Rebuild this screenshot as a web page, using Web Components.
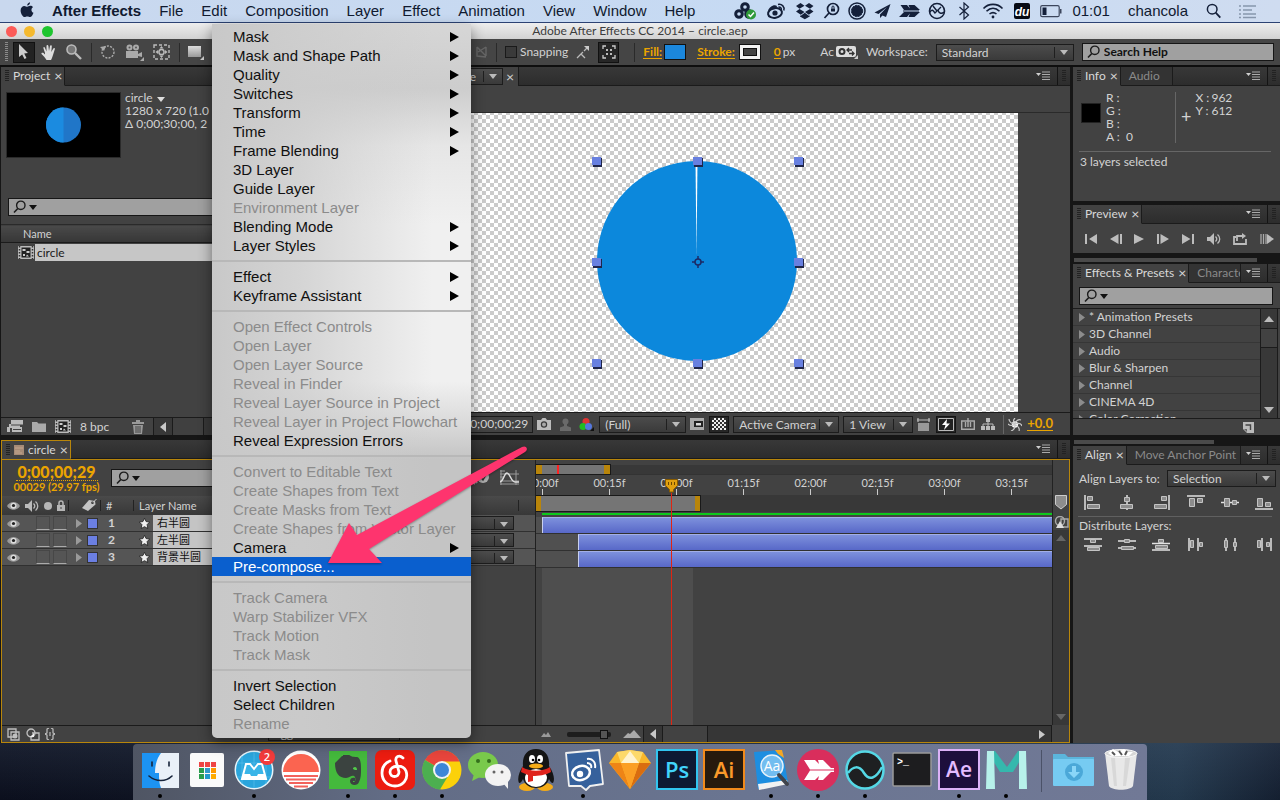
<!DOCTYPE html>
<html lang="en">
<head>
<meta charset="utf-8">
<title>Adobe After Effects CC 2014 - circle.aep</title>
<style>
  html, body { margin: 0; height: 100%; }
  body {
    display: flex; flex-direction: column; overflow: hidden; position: relative;
    font: 12px/14px Lato, "Noto Sans", "Noto Sans CJK SC", sans-serif;
    color: #d2d2d2;
    background: linear-gradient(90deg, #0b0f1d 0, #151d2c 50%, #23384c 92%, #141f30 100%);
    --panel: #424242; --line: #1b1b1b; --gold: #eaa400; --mac: "Liberation Sans", Arial, sans-serif;
  }
  ae-window { flex: 1; min-height: 0; }
</style>
</head>
<body>
<mac-menubar></mac-menubar>
<ae-window></ae-window>
<mac-dock></mac-dock>
<layer-menu></layer-menu>
<pointer-arrow></pointer-arrow>

<script>
const make = (name, html, setup) => customElements.define(name, class extends HTMLElement {
  constructor() {
    super();
    const t = document.createElement('template');
    t.innerHTML = html;
    this.attachShadow({ mode: 'open' }).append(t.content.cloneNode(true));
  }
  connectedCallback() { if (setup && !this.ready) { this.ready = true; setup(this, this.shadowRoot); } }
});

/* ---------- icon set: name -> [width, height, markup] ---------- */
const ICONS = {
  apple: [14, 16, '<path fill="#14203a" d="M10 .3c.2 1.600-1.200 3.300-2.800 3.300C7 2 8.500.500 10 .3zM7.300 4.700c.7 0 1.700-1 3.100-.9 1 0 2 .5 2.600 1.400-2.300 1.400-1.900 4.700.5 5.600-.7 2-2 4.300-3.500 4.300-1 0-1.400-.7-2.700-.7-1.300 0-1.700.7-2.700.7C2.900 15.100.600 11.600.600 8.500c0-3 1.900-4.600 3.700-4.600 1.300 0 2.200.8 3 .8z"/>'],
  triad: [24, 18, '<g fill="none" stroke="#14203a" stroke-width="3"><circle cx="11" cy="5" r="3.300"/><circle cx="5" cy="12" r="3.300"/><circle cx="15" cy="12" r="3.300"/></g><circle cx="17" cy="12.500" r="5" fill="#2f9a3a"/><path d="M14.500 12.500l2 2 3.500-4" stroke="#fff" stroke-width="1.500" fill="none"/>'],
  weibo: [21, 18, '<ellipse cx="9" cy="11" rx="7" ry="4.800" fill="none" stroke="#14203a" stroke-width="2" transform="rotate(-10 9 11)"/><path fill="#14203a" d="M2 9c1-4 6-7 9-5l-1 3c-3 0-6 1-8 2z"/><circle cx="9" cy="11" r="2.600" fill="#14203a"/><path d="M12 2.500c4-.8 7 2.500 5.800 6M12.500 5c2-.2 3.200 1 2.800 3" stroke="#14203a" stroke-width="1.500" fill="none"/>'],
  dropbox: [20, 18, '<path fill="#14203a" d="M5.500 1L1 4l3.500 2.700L9.500 3.700zM14 1l4.500 3L15 6.700 10 3.700zM1 9.500l3.500-2.600 5 3-3.700 2.800zM18.500 9.500L15 6.900l-5 3 3.800 2.800zM5 13.500l.8.300 4-3 4 3 .9-.4v1l-4.900 2.800-4.800-2.800z"/>'],
  maglock: [17, 18, '<g fill="none" stroke="#14203a" stroke-width="1.700"><circle cx="10" cy="7" r="5.500"/><path d="M6 11l-4.500 5"/></g><path fill="#14203a" d="M8 6.500h4v3H8z"/><path d="M9 6.500v-1.500a1 1 0 012 0v1.500" fill="none" stroke="#14203a"/>'],
  badge: [18, 18, '<circle cx="9" cy="9" r="8" fill="none" stroke="#14203a" stroke-width="1.500"/><circle cx="9" cy="9" r="5.700" fill="#14203a" stroke="#14203a" stroke-dasharray="2 1"/>'],
  plane: [17, 18, '<path fill="#14203a" d="M16.500 2L.5 10.500l4 1.500L13 5 6 12.500V16l2.500-2.500 3.500 1.500z"/>'],
  arrows: [21, 18, '<path fill="#14203a" d="M0 3h8l3 3.500L9.500 3h6L21 8H5L1.500 3zM0 15h8l3-3.500L9.500 15h6L21 10H5z"/><path d="M4 9h16" stroke="#14203a"/>'],
  pulse: [18, 18, '<circle cx="9" cy="9" r="7.500" fill="none" stroke="#14203a" stroke-width="1.600"/><path d="M2 10c2-3 3-2 5 1l6-6M10 8c1 4 4 4 6 2M5 4l4 5" fill="none" stroke="#14203a" stroke-width="1.400"/>'],
  bluetooth: [20, 18, '<path d="M5.500 5l9 8-4.500 4V1l4.500 4-9 8" fill="none" stroke="#14203a" stroke-width="1.200"/>'],
  wifi: [22, 18, '<g fill="none" stroke="#14203a" stroke-width="1.600"><path d="M1.500 6.500c5-5.500 14-5.500 19 0M4.500 9.300c4-4 9-4 13 0M7.500 12c2.500-2 4.500-2 7 0"/></g><circle cx="11" cy="15" r="1.400" fill="#14203a"/>'],
  du: [20, 18, '<rect x="2" y="1" width="16" height="16" rx="2" fill="#060a14"/><text x="10" y="13.500" text-anchor="middle" font-family="Liberation Sans" font-style="italic" font-weight="bold" font-size="12" fill="#fff">du</text>'],
  battery: [22, 18, '<rect x=".7" y="3.700" width="18.500" height="11" rx="1.500" fill="none" stroke="#3c465c" stroke-width="1.200"/><rect x="2.500" y="5.500" width="4" height="7.500" fill="#14203a"/><path fill="#3c465c" d="M20 7h1.500v4.500H20z"/>'],
  spot: [15, 18, '<circle cx="6.200" cy="7.200" r="4.800" fill="none" stroke="#14203a" stroke-width="1.500"/><path d="M9.700 10.700l4.600 5" stroke="#14203a" stroke-width="1.800"/>'],
  list: [18, 18, '<path d="M0 4h2M4 4h13M0 8h2M4 8h9M0 12h2M4 12h13M0 15.500h2M4 15.500h13" stroke="#8796ac" stroke-width="1.700"/>'],
  grip: [4, 12, '<path d="M0 .5h4M0 2.500h4M0 4.500h4M0 6.500h4M0 8.500h4M0 10.500h4" stroke="#222"/>'],
  bargrip: [3, 20, '<path d="M0 .5h3M0 2.500h3M0 4.500h3M0 6.500h3M0 8.500h3M0 10.500h3M0 12.500h3M0 14.500h3M0 16.500h3M0 18.500h3" stroke="#8a8a8a"/>'],
  menu: [15, 10, '<path fill="#d0d0d0" d="M0 2h5L2.500 5z"/><path d="M6 1h8M6 3.500h8M6 6h8M6 8.500h8" stroke="#aaa" stroke-width="1.200"/>'],
  cursor: [10, 16, '<path fill="#ccc" d="M0 0l9 9-3.800.4 2.300 4.600-2 1-2.300-4.600L0 13z"/>'],
  hand: [16, 16, '<path fill="#ddd" d="M4 9L2.500 4.500C2 3 3.500 2.500 4 4l1.500 3.500L5.500 2c0-1.500 1.700-1.500 1.900 0L8 7l1-5c.3-1.400 2-1 1.800.4L10.300 8l2-3.500c.7-1.200 2-.5 1.500.8L12 11c-.6 2-1.500 4.500-2 5H5.500C4.500 14 2 11.500.5 10 0 8.800 1.500 8.300 2.500 9L4 10.500z"/>'],
  zoom: [16, 16, '<circle cx="5.500" cy="5.500" r="4.500" fill="#777" stroke="#bbb" stroke-width="1.600"/><path d="M9 9l6 6" stroke="#bbb" stroke-width="2.400"/>'],
  rotate: [16, 16, '<circle cx="8" cy="8" r="6" fill="none" stroke="#aaa" stroke-width="1.400" stroke-dasharray="2 1.300"/><path fill="#aaa" d="M0 3l6-1-2 5z"/>'],
  camera: [19, 17, '<g fill="#aaa"><circle cx="4.500" cy="3.500" r="3"/><circle cx="11" cy="3.500" r="3"/><path d="M1 7h12v7H1zM13 10l4-2v5l-4-1zM19 17v-4l-4 4z"/></g><circle cx="4.500" cy="3.500" r="1" fill="#555"/><circle cx="11" cy="3.500" r="1" fill="#555"/>'],
  panbehind: [17, 16, '<rect x="1" y="1" width="15" height="14" fill="none" stroke="#bbb" stroke-width="1.400" stroke-dasharray="3 2"/><circle cx="8.500" cy="8" r="2.600" fill="none" stroke="#bbb" stroke-width="1.500"/><path fill="#bbb" d="M8.500 2l2 2.500h-4zM8.500 14l2-2.500h-4zM2.500 8L5 6v4zM14.500 8L12 6v4z"/>'],
  rect: [16, 16, '<defs><linearGradient id="r" x2="0" y2="1"><stop stop-color="#ddd"/><stop offset="1" stop-color="#999"/></linearGradient></defs><rect x="0" y="2" width="13" height="11" fill="url(#r)"/><path fill="#ccc" d="M16 16v-4l-4 4z"/>'],
  pen: [14, 14, '<path fill="#bbb" d="M0 7l6-6 5 6-5 6z"/>'],
  axis: [12, 12, '<path d="M1 1v9l9 1M1 1l9 9M10 1v9M2 6l8-5" stroke="#666" stroke-width="1.400" fill="none"/>'],
  snap: [14, 14, '<path d="M1 13l6-6M5 9l4 4M8 6l3-3" stroke="#bbb" stroke-width="1.300" fill="none"/><path fill="#ccc" d="M8 1h5v5z"/>'],
  focus: [14, 14, '<path d="M1 4V1h3M10 1h3v3M13 10v3h-3M4 13H1v-3" stroke="#ccc" stroke-width="1.300" fill="none"/><path fill="#bbb" d="M4 4h2v2H4zM8 4h2v2H8zM4 8h2v2H4zM8 8h2v2H8z"/>'],
  pill: [22, 14, '<rect x="0" y="1" width="20" height="11" rx="2" fill="#ddd"/><circle cx="6" cy="6.500" r="2.500" fill="none" stroke="#333" stroke-width="2"/><path d="M11 5h5M13 8.500h5M13 3l-2 2 2 2M16 6.500l2 2-2 2" stroke="#333" stroke-width="1.300" fill="none"/><path fill="#ccc" d="M22 14v-4l-4 4z"/>'],
  search: [13, 14, '<circle cx="7.800" cy="5.300" r="4.200" fill="none" stroke="#1c1c1c" stroke-width="1.400"/><path d="M4.800 8.500L1 12.500" stroke="#1c1c1c" stroke-width="1.600"/>'],
  down: [8, 5, '<path fill="currentColor" d="M0 0h8L4 5z"/>'],
  up: [10, 6, '<path fill="currentColor" d="M5 0l5 6H0z"/>'],
  right: [6, 9, '<path fill="currentColor" d="M0 0l6 4.500L0 9z"/>'],
  left: [6, 10, '<path fill="#c8c8c8" d="M6 0v10L0 5z"/>'],
  film: [16, 13, '<path fill="#bbb" d="M0 0h16v13H0z"/><path d="M1.500 0v13M14.500 0v13" stroke="#333" stroke-width="1.500" stroke-dasharray="1.500 1.500"/><path fill="#222" d="M3.500 1.500h9v10h-9z"/><path fill="#ccc" d="M4.500 3h3v2h-3zM8.500 5h3v2h-3zM5 8h2v2H5zM9 8.500l2 2H8z"/>'],
  footage: [16, 13, '<path fill="#bbb" d="M4 0h12v5H4zM2 4h11v4H2zM0 7h3v5H0zM5 7h10v5H5z"/><path d="M4 5h12M6 9.500h8" stroke="#444"/>'],
  folder: [14, 11, '<path fill="#aaa" d="M0 1h5l1.500 1.500H14V11H0z"/>'],
  trash: [12, 14, '<path fill="#999" d="M0 2h12v2H0zM4 0h4v2H4zM1 5h10l-1 9H2z"/><path d="M4 6v7M6 6v7M8 6v7" stroke="#444"/>'],
  square: [10, 10, '<path fill="#a68b77" d="M0 0h10v10H0z"/><path d="M1 3h8M1 6h5M1 8h7" stroke="#c5a78f"/>'],
  eye: [13, 9, '<path fill="#999" d="M0 5C3-.5 10-.5 13 5c-3 5-10 5-13 0z"/><circle cx="6.500" cy="4.700" r="3" fill="#ddd"/><circle cx="6.500" cy="4.500" r="1.600" fill="#222"/>'],
  speaker: [14, 12, '<path fill="#bbb" d="M0 4h3l4-4v12L3 8H0z"/><path d="M8.500 3.500c1.500 1.500 1.500 3.500 0 5M10.500 1.500c3 2.500 3 6.500 0 9" stroke="#bbb" stroke-width="1.300" fill="none"/>'],
  dot: [8, 8, '<circle cx="4" cy="4" r="4" fill="#b5b5b5"/>'],
  lock: [8, 11, '<path fill="#b5b5b5" d="M0 5h8v6H0z"/><path d="M2 5V3a2 2 0 014 0v2" stroke="#b5b5b5" stroke-width="1.500" fill="none"/><path fill="#444" d="M3.500 7h1v2h-1z"/>'],
  tag: [15, 13, '<path fill="#c4c4c4" d="M0 9l7-8 6 1 .5 3.500L6 12z"/><circle cx="10.500" cy="3.800" r="1.300" fill="#333"/><path d="M11 3.500L14.500 0" stroke="#ccc"/>'],
  star: [11, 11, '<path fill="#f0f0f0" stroke="#1c1c1c" stroke-width=".8" d="M5.500.3l1.600 3.300 3.600.4-2.600 2.600.7 3.900-3.300-1.800-3.300 1.800.7-3.900L.3 4l3.600-.4z"/>'],
  mblur: [20, 16, '<circle cx="12" cy="7" r="6" fill="#aaa"/><path d="M9 6l3 4 4-7" stroke="#333" stroke-width="1.500" fill="none"/><path d="M1 12l3 2M3 9l3 4" stroke="#aaa" stroke-width="2"/>'],
  graph: [20, 16, '<path d="M1 0v15M0 1h5M0 4h19M0 7h4M0 11h19M0 14h19M16 0v15" stroke="#999" stroke-width="1"/><path d="M0 12c4-1 4-9 7-9s4 9 8 9h4" stroke="#ddd" stroke-width="1.500" fill="none"/>'],
  t1: [14, 13, '<path fill="none" stroke="#c0c0c0" stroke-width="1.300" d="M1 1h8v8H1zM4 4h8v8H4z"/><circle cx="8" cy="8" r="2.500" fill="#c0c0c0"/>'],
  t2: [14, 13, '<circle cx="5" cy="5" r="4" fill="none" stroke="#c0c0c0" stroke-width="1.300"/><path fill="none" stroke="#c0c0c0" stroke-width="1.300" d="M6 5h7v7H5V8"/><path d="M4 9l4-4v4z" fill="#eee"/>'],
  t3: [10, 12, '<path d="M4 0L2 1v4L0 6l2 1v4l2 1M6 0l2 1v4l2 1-2 1v4l-2 1M5 4v4" stroke="#c0c0c0" fill="none" stroke-width="1.200"/>'],
  hillS: [10, 6, '<path fill="#999" d="M0 6l3-4 2 2 2-3 3 5z"/>'],
  hillL: [18, 8, '<path fill="#aaa" d="M0 8l5-5 2 1 4-4 7 8z"/>'],
  marker: [12, 15, '<path fill="#8d8d8d" stroke="#ccc" d="M.5.5h11v9L6 14 .5 9.500z"/>'],
  comp: [15, 13, '<circle cx="6" cy="5" r="4.500" fill="none" stroke="#aaa" stroke-width="1.400"/><path fill="none" stroke="#aaa" stroke-width="1.400" d="M7 3h7v8H7z"/><path fill="#ddd" d="M2 12l4-7 4 7z"/>'],
  snapshot: [14, 12, '<path fill="#bcbcbc" d="M0 2h4l1.500-2h3L10 2h4v10H0z"/><circle cx="7" cy="6.500" r="3.200" fill="#3a3a3a"/><circle cx="7" cy="6.500" r="2" fill="#aaa"/>'],
  person: [11, 13, '<circle cx="5.500" cy="3.500" r="3" fill="#6a6a6a"/><path fill="#6a6a6a" d="M4 6h3v2l4 1.500V13H0V9.500L4 8z"/>'],
  rgb: [15, 13, '<circle cx="7" cy="3.500" r="3.500" fill="#d33"/><circle cx="4" cy="8.500" r="3.500" fill="#2b2"/><circle cx="9.500" cy="8.500" r="3.500" fill="#57d"/><path fill="#111" d="M15 13v-4l-4 4z"/>'],
  roi: [14, 12, '<path fill="#aaa" d="M0 0h14v12H0z"/><path fill="#222" d="M4 3h9v6H4z"/><path fill="#ddd" d="M6 5h5v2.500H6z"/>'],
  alpha: [14, 12, '<path fill="#eee" d="M0 0h14v12H0z"/><path stroke="#333" stroke-width="2" stroke-dasharray="2 2" d="M0 1h14M2 3h12M0 5h14M2 7h12M0 9h14M2 11h12"/>'],
  px: [13, 13, '<path fill="#999" d="M1 5h11v8H1z"/><path d="M0 2h13M1 0v4M12 0v4" stroke="#bbb" stroke-width="1.200"/>'],
  flash: [16, 13, '<path fill="#222" stroke="#bbb" d="M.5.5h15v12H.5z"/><path fill="#fff" d="M9 1L4 7h3.500L6 12l6-6.500H8.500z"/>'],
  tl: [14, 12, '<path fill="none" stroke="#aaa" stroke-width="1.400" d="M.7 3h12.600v8.300H.7z"/><path d="M4.500 4v5M9.500 4v5M7 0v9" stroke="#aaa" stroke-width="1.400"/>'],
  tree: [14, 12, '<path fill="#bbb" d="M5 0h4v4H5zM0 8h4v4H0zM5 8h4v4H5zM10 8h4v4h-4z"/><path d="M7 4v4M2 8V6h10v2" stroke="#bbb" fill="none"/>'],
  aperture: [14, 13, '<circle cx="7" cy="6.500" r="3.200" fill="#fff"/><path d="M7 0c-2 2-2 4 0 6M13 2c-3-1-5 1-6 4M14 8c-1-3-4-3-7-2M11 13c1-3-1-5-4-6M3 13c3-1 4-3 4-6M0 6c2 2 5 2 7 0M1 1c0 3 3 5 6 5" stroke="#c8c8c8" stroke-width="1.200" fill="none"/>'],
  first: [12, 10, '<path fill="#bcbcbc" d="M0 0h2v10H0zM12 0v10L4 5z"/>'],
  prev: [12, 10, '<path fill="#bcbcbc" d="M10 0h2v10h-2zM8.500 0v10L0 5z"/>'],
  play: [10, 10, '<path fill="#bcbcbc" d="M0 0l10 5-10 5z"/>'],
  next: [12, 10, '<path fill="#bcbcbc" d="M0 0h2v10H0zM3.500 0v10L12 5z"/>'],
  last: [12, 10, '<path fill="#bcbcbc" d="M10 0h2v10h-2zM0 0v10l8.500-5z"/>'],
  loop: [14, 12, '<path d="M3 4H1v7h12V6M4 8V3h6" fill="none" stroke="#bcbcbc" stroke-width="1.800"/><path fill="#bcbcbc" d="M9 0l4 3-4 3z"/>'],
  ram: [14, 10, '<path d="M1 0v10M3.500 0v10M6 0v10" stroke="#aaa" stroke-width="1.300"/><path fill="#bcbcbc" d="M7 0l7 5-7 5z"/>'],
  note: [11, 11, '<path fill="#bbb" d="M0 0h11v11H4L0 7z"/><path d="M2.500 3h5v5" stroke="#444" fill="none" stroke-width="1.400"/><path fill="#666" d="M1 7h3v3z"/>'],
};
/* align and distribute glyphs share one vocabulary: a guide stroke plus two blocks */
const G = d => `<g fill="#8c8c8c" stroke="#c4c4c4">${d}</g>`, L = d => `<path d="${d}" stroke="#e2e2e2" stroke-width="1.500"/>`;
Object.assign(ICONS, {
  al: [18, 15, L('M1 0v15') + G('<path d="M3.500 1.500h5v4h-5zM3.500 9.500h12v4h-12z"/>')],
  ac: [18, 15, L('M9 0v15') + G('<path d="M6.500 2.500h5v4h-5zM2.500 9.500h12v4h-12z"/>')],
  ar: [18, 15, L('M17 0v15') + G('<path d="M9.500 1.500h5v4h-5zM2.500 9.500h12v4h-12z"/>')],
  at: [18, 15, L('M0 1h18') + G('<path d="M2.500 3.500h5v8h-5zM10.500 3.500h5v4h-5z"/>')],
  am: [18, 15, L('M0 7.500h18') + G('<path d="M3.500 3.500h5v8h-5zM11.500 5.500h4v4h-4z"/>')],
  ab: [18, 15, L('M0 14h18') + G('<path d="M2.500 3.500h5v8h-5zM10.500 7.500h5v4h-5z"/>')],
  d1: [18, 13, L('M0 1h18M0 8h18') + G('<path d="M6.500 1.500h5v3h-5zM3.500 9.500h12v3h-12z"/>')],
  d2: [18, 13, L('M0 3h18M0 10h18') + G('<path d="M6.500 1.500h5v3h-5zM3.500 8.500h12v3h-12z"/>')],
  d3: [18, 13, L('M0 5.500h18M0 12h18') + G('<path d="M6.500 1.500h5v3h-5zM3.500 7.500h12v3h-12z"/>')],
  d4: [18, 13, L('M2 0v13M11 0v13') + G('<path d="M3.500 2.500h3v7h-3zM12.500 4.500h3v4h-3z"/>')],
  d5: [18, 13, L('M5 0v13M14 0v13') + G('<path d="M3.500 2.500h3v7h-3zM12.500 4.500h3v4h-3z"/>')],
  d6: [18, 13, L('M7 0v13M16 0v13') + G('<path d="M2.500 2.500h3v7h-3zM11.500 4.500h3v4h-3z"/>')],
});
make('ui-icon', `<style>:host{display:inline-flex;flex:none}svg{display:block}</style>`, (el, root) => {
  const [w, h, body] = ICONS[el.getAttribute('name')];
  root.innerHTML += `<svg width="${w}" height="${h}" viewBox="0 0 ${w} ${h}" aria-hidden="true">${body}</svg>`;
});
const ic = n => `<ui-icon name="${n}"></ui-icon>`;
const BTN = 'button{all:unset;display:inline-flex;align-items:center;box-sizing:border-box;cursor:default}';

/* ---------- system menu bar ---------- */
make('mac-menubar', `<style>
  :host{display:flex;align-items:center;height:22px;flex:none;border-bottom:1px solid #2c4273;
    background:linear-gradient(90deg,#c9d8ee,#c6daf3 60%,#cfdcf0);color:#101a30;font:15px/22px var(--mac)}
  ${BTN}
  nav{display:flex;gap:18px;padding-left:20px;flex:1;align-items:center}
  nav ui-icon{margin-bottom:2px}
  .tray{display:flex;gap:8px;align-items:center;padding-right:10px}
  .user{display:flex;gap:18px;align-items:center;padding-right:23px}
  b{font-weight:700}
</style>
<nav>${ic('apple')}<button><b>After Effects</b></button>${['File', 'Edit', 'Composition', 'Layer', 'Effect', 'Animation', 'View', 'Window', 'Help'].map(t => `<button>${t}</button>`).join('')}</nav>
<div class="tray">${['triad', 'weibo', 'dropbox', 'maglock', 'badge', 'plane', 'arrows', 'pulse', 'bluetooth', 'wifi', 'du', 'battery'].map(ic).join('')}</div>
<div class="user"><time>01:01</time><span>chancola</span>${ic('spot')}${ic('list')}</div>`);

/* ---------- shared controls ---------- */
make('ae-select', `<style>
  :host{display:inline-grid;height:17px;box-sizing:border-box;border:1px solid #1c1c1c;background:linear-gradient(#4c4c4c,#3a3a3a);align-items:center;position:relative}
  select{appearance:none;border:0;background:none;color:#d2d2d2;font:inherit;line-height:15px;height:15px;padding:0 20px 0 5px;width:100%;outline:0;grid-area:1/1}
  :host([end]) select{text-align-last:right;padding-right:26px}
  i{grid-area:1/1;justify-self:end;border-left:1px solid #1f1f1f;padding:0 5px 0 5px;height:11px;display:flex;align-items:center;color:#bbb;pointer-events:none}
</style><select></select><i>${ic('down')}</i>`, (el, root) => {
  const s = root.querySelector('select');
  s.setAttribute('aria-label', el.getAttribute('label'));
  s.add(new Option(el.getAttribute('value') || ''));
});
make('ae-search', `<style>
  :host{display:flex;align-items:center;gap:1px;box-sizing:border-box;height:18px;border:1px solid #161616;background:#a0a0a0;padding:0 4px;color:#111}
  input{all:unset;flex:1;min-width:0;color:#111;font:inherit;font-weight:700}
  input::placeholder{color:#111;opacity:1}
  span{display:flex;padding:0 2px}
  :host([wide]) span{display:none} :host([wide]) input{padding-left:3px}
</style>${ic('search')}<span>${ic('down')}</span><input type="search">`, (el, root) => {
  const i = root.querySelector('input');
  i.setAttribute('aria-label', el.getAttribute('label'));
  i.placeholder = el.getAttribute('hint') || '';
});
make('ae-tab', `<style>
  :host{display:flex;align-items:center;box-sizing:border-box;height:19px;padding:0 12px 0 8px;color:#8a8a8a;border-right:1px solid var(--line);border-bottom:1px solid var(--line);white-space:nowrap;background:#333}
  :host(:not([active])){flex:0 1 auto;min-width:0;overflow:hidden}
  :host([active]){background:var(--panel);color:#d8d8d8;border-bottom-color:var(--panel);padding:0 2px 0 4px;gap:4px;flex:none}
  ${BTN} .x{font-size:14px} .x,ui-icon{display:none}
  :host([active]) .x,:host([active]) ui-icon{display:inline-flex}
  :host([active]) .x{width:8px}
</style>${ic('grip')}<button><slot></slot></button><button class="x" aria-label="Close tab">×</button>`);
make('ae-panel', `<style>
  :host{display:flex;flex-direction:column;min-width:0;min-height:0;background:var(--panel);overflow:hidden}
  header{display:flex;height:19px;flex:none;background:linear-gradient(#383838,#2c2c2c)}
  .rest{flex:1 0 auto;display:flex;justify-content:flex-end;align-items:center;border-bottom:1px solid var(--line);height:18px}
  .tabs{display:flex;flex:0 1 auto;min-width:0;overflow:hidden}
  .m{padding:0 6px 0 5px;flex:none;display:flex}
  .g{border-left:1px solid #141414;padding:0 4px;height:18px;display:flex;align-items:center}
  .body{flex:1;min-height:0;display:flex;flex-direction:column}
</style>
<header><div class="tabs"><slot name="tab"></slot></div><div class="rest"><span class="m">${ic('menu')}</span><span class="g">${ic('grip')}</span></div></header>
<div class="body"><slot></slot></div>`);

/* ---------- tool bar ---------- */
make('ae-toolbar', `<style>
  :host{display:flex;align-items:center;height:26px;flex:none;background:#454545;border-bottom:2px solid #0e0e0e;position:relative;white-space:nowrap;overflow:hidden}
  ${BTN}
  .tools{display:flex;align-items:center;padding-left:5px;flex:1;min-width:0;overflow:hidden}
  .tools>*{flex:none}
  .tools ui-icon{margin-right:9px}
  .sel{width:22px;height:21px;justify-content:center;background:#222;border:1px solid #111;margin:0 6px 0 5px}
  .sel ui-icon,.tools .g{margin:0}
  i{width:1px;height:19px;background:#2a2a2a;margin-right:8px}
  .right i{margin:0}
  .right{display:flex;align-items:center;flex:none;width:804px;padding-right:6px;box-sizing:border-box;gap:8px}
  label{display:flex;align-items:center;gap:3px}
  input[type=checkbox]{appearance:none;width:12px;height:12px;margin:0;background:#3a3a3a;border:1px solid #1a1a1a}
  .hot{color:var(--gold);border-bottom:1px solid var(--gold);line-height:13px;font-weight:700}
  .sw{width:22px;height:16px;background:#1b87dc;border:1px solid #111;margin-right:3px}
  .st{width:20px;height:14px;background:#444;border:3px solid #f4f4f4;outline:1px solid #111;box-shadow:inset 0 0 0 1px #111;margin:0 6px 0 3px}
  .f{width:21px;height:21px;background:#262626;border:1px solid #111;justify-content:center;margin-right:7px}
  .pair{display:flex;gap:2px;align-items:center}
  .zero{margin-right:17px}
  ae-select{width:138px} ae-search{flex:1}
</style>
<div class="tools"><ui-icon class="g" name="bargrip"></ui-icon><button class="sel" aria-label="Selection">${ic('cursor')}</button>${ic('hand')}${ic('zoom')}<i></i>${ic('rotate')}${ic('camera')}${ic('panbehind')}<i></i>${ic('rect')}${ic('pen')}</div>
<div class="right">${ic('axis')}<i></i><label><input type="checkbox">Snapping</label>${ic('snap')}<button class="f" aria-label="Snap options">${ic('focus')}</button><i></i>
<span class="pair"><button class="hot">Fill:</button><button class="sw" aria-label="Fill colour"></button></span>
<span class="pair"><button class="hot">Stroke:</button><button class="st" aria-label="Stroke colour"></button></span>
<span class="pair zero"><button class="hot">0</button><span>px</span></span>
<span class="pair">Ac ${ic('pill')}</span><span class="w">Workspace:</span><ae-select label="Workspace" value="Standard"></ae-select><ae-search wide label="Search Help" hint="Search Help"></ae-search></div>`);

/* ---------- project panel ---------- */
make('project-panel', `<style>
  :host{display:grid;min-width:0;min-height:0}
  .info{display:flex;gap:5px;padding:7px 0 0 6px;line-height:13px;white-space:nowrap}
  .info svg{display:block;background:#000;outline:1px solid #2a2a2a} p{margin:-2px 0 0;}
  .info p ui-icon{margin-left:4px;color:#ddd}
  ae-search{margin:41px 4px 0 7px}
  table{width:100%;border-collapse:collapse;margin-top:8px;border-top:1px solid #2a2a2a}
  th{font-weight:400;font-size:11px;text-align:left;height:17px;padding:0 0 0 22px;background:linear-gradient(#4a4a4a,#363636);border-bottom:1px solid var(--line)}
  td{padding:1px 0 0;} td div{display:flex;align-items:center;height:17px;padding-left:17px;gap:1px}
  td span{flex:1;background:#c6c6c6;color:#1a1a1a;height:17px;line-height:17px;padding-left:2px}
  .list{flex:1;min-height:0}
  footer{display:flex;align-items:center;height:17px;border-top:1px solid var(--line);padding-left:6px;gap:9px}
  footer .t{margin-left:14px} .sb{display:flex;flex:1;height:17px;border-left:1px solid var(--line);background:#383838;align-items:center}
  .sb ui-icon{margin:0 6px} .sb b{width:30px;height:17px;border:solid var(--line);border-width:0 1px;background:#404040}
</style>
<ae-panel><ae-tab slot="tab" active>Project</ae-tab>
<div class="info"><svg width="113" height="64" viewBox="0 0 113 64"><circle cx="56.500" cy="32" r="17.500" fill="#2076c8"/><path fill="#1b8be0" d="M56.500 14.500a17.500 17.500 0 000 35z"/></svg>
<p>circle${ic('down')}<br>1280 x 720 (1.0<br>Δ 0;00;30;00, 2</p></div>
<ae-search label="Search project"></ae-search>
<div class="list"><table><thead><tr><th>Name</th></tr></thead><tbody><tr><td><div>${ic('film')}<span>circle</span></div></td></tr></tbody></table></div>
<footer>${ic('footage')}${ic('folder')}${ic('film')}<span>8 bpc</span><ui-icon class="t" name="trash"></ui-icon><div class="sb">${ic('left')}<b></b></div></footer>
</ae-panel>`);

/* ---------- composition viewer ---------- */
const handles = [597, 698, 799].flatMap(x => [161, 262, 363].map(y => [x, y])).filter(([x, y]) => !(x === 698 && y === 262))
  .map(([x, y]) => `<g transform="translate(${x - 383} ${y - 87})"><path fill="#20264a" d="M1 1h9v9H1z"/><path fill="#6880e0" d="M0 0h9v8H0z"/></g>`).join('');
make('comp-viewer', `<style>
  :host{display:grid;min-width:0;min-height:0}
  ${BTN}
  .tab{display:flex;align-items:center;gap:3px;height:19px;background:var(--panel);border-right:1px solid var(--line);padding:0 4px 0 7px}
  .tab ae-select{width:170px;height:17px} .tab button{font-size:14px}
  .stage{flex:1;min-height:0;margin-top:26px;border-top:1px solid #2a2a2a;display:flex;justify-content:center;align-items:center;overflow:hidden}
  svg{flex:none;display:block;background:conic-gradient(#cbcbcb 25%,#fff 0 50%,#cbcbcb 0 75%,#fff 0) 0 0/8px 8px}
  footer{display:flex;align-items:center;justify-content:flex-end;height:22px;flex:none;border-top:1px solid #1b1b1b;padding-right:17px;gap:4px;white-space:nowrap}
  .tc{border:1px solid #1c1c1c;height:17px;padding:0 4px 0 20px}
  .hot{color:var(--gold);border-bottom:1px solid var(--gold);font-weight:700;line-height:13px;font-size:13px}
  .on{background:#262626;border:1px solid #141414;width:20px;height:17px;justify-content:center}
  .a{width:87px}.b{width:106px}.c{width:70px}
  .r{display:flex;align-items:center;gap:5px;padding-right:3px}
  footer ui-icon{margin:0 1px 0 0} .gap{margin:0 4px}.on ui-icon{margin:0} i{width:1px;height:19px;background:#666}
</style>
<ae-panel><div slot="tab" class="tab"><ae-select end label="Composition" value="Composition: circle"></ae-select><button aria-label="Close tab">×</button></div>
<div class="stage"><svg width="640" height="360" viewBox="0 0 640 360"><circle cx="319" cy="178" r="100" fill="#0c88dc"/><path fill="#fff" d="M317.500 79l2 0-1 95z"/>${handles}<g transform="translate(320 179)" fill="none" stroke="#1c2a66" stroke-width="1.500"><circle r="3"/><path d="M0-6v3M0 3v3M-6 0h3M3 0h3"/></g></svg></div>
<footer><button class="tc">0;00;00;29</button>${ic('snapshot')}<ui-icon class="gap" name="person"></ui-icon>${ic('rgb')}<ae-select class="a" label="Resolution" value="(Full)"></ae-select>${ic('roi')}<button class="on" aria-label="Transparency grid">${ic('alpha')}</button><ae-select class="b" label="3D view" value="Active Camera"></ae-select><ae-select class="c" label="View layout" value="1 View"></ae-select><span class="r">${ic('px')}<button class="on" aria-label="Fast previews">${ic('flash')}</button>${ic('tl')}${ic('tree')}</span><i></i>${ic('aperture')}<button class="hot">+0.0</button></footer>
</ae-panel>`);

/* ---------- timeline ---------- */
make('time-graph', `<style>
  :host{display:flex;flex-direction:column;position:relative;overflow:hidden;min-width:0;border-left:1px solid #202020}
  .nav{height:9px;margin-top:5px;background:#383838;display:flex;border-bottom:1px solid #333}
  .nav b,.area b{background:#757575;box-sizing:border-box;border:solid #b9850a;border-width:0 6px;outline:1px solid #191919}
  .nav b{width:74px;background:linear-gradient(#f22,#f22) 15px 0/2px 100% no-repeat #757575}
  .ruler{display:flex;height:20px;margin-left:-27px;font-size:11px;line-height:16px}
  .ruler span{flex:none;width:67px;text-align:center;background:linear-gradient(#ccc,#ccc) 50% 100%/1px 6px no-repeat}
  .area{height:15px;background:#383838;display:flex;padding:1px 0} .area b{width:164px;border-width:0 5px}
  .cache{height:2px;background:#0cc81c;margin:1px 0 2px 6px;}
  .tracks{flex:1;background:linear-gradient(#4e4e4e,#4e4e4e) 6px 0/151px 100% no-repeat}
  .row{height:16px;border-bottom:1px solid #303030;background:#505050;display:flex}
  .row b{flex:1;margin-left:6px;background:linear-gradient(#7d90dc,#5868c8);border-top:1px solid #a3afe6;border-left:1px solid #c8d0f0;box-sizing:border-box}
  .row.late b{margin-left:42px}
  .head{position:absolute;left:129px;top:19px;bottom:0;display:flex;flex-direction:column;align-items:center;width:13px}
  .head svg{display:block} .head u{flex:1;width:1px;background:#e02412}
</style>
<div class="nav"><b></b></div>
<div class="ruler">${['00:00f', '00:15f', '01:00f', '01:15f', '02:00f', '02:15f', '03:00f', '03:15f'].map(t => `<span>${t}</span>`).join('')}</div>
<div class="area"><b></b></div><div class="cache"></div>
<div class="tracks"><div class="row"><b></b></div><div class="row late"><b></b></div><div class="row late"><b></b></div></div>
<div class="head"><svg width="13" height="14" viewBox="0 0 13 14"><path fill="#e0a010" stroke="#8a5c00" d="M.5.5h12v6L8.500 10.500V13h-4v-2.500L.5 6.500z"/><path d="M3.500 3v3M6.500 3v3M9.500 3v3" stroke="#6b4700"/></svg><u></u></div>`);

const layer = (n, name) => `<tr><td><div class="av">${ic('eye')}<s></s><s></s></div></td><td><div class="lb">${ic('right')}<em></em></div></td><td class="n">${n}</td><td><div class="nm">${ic('star')}<span>${name}</span></div></td><td><ae-select label="Parent of ${name}"></ae-select></td></tr>`;
make('timeline-panel', `<style>
  :host{display:grid;min-width:0;min-height:0}
  ${BTN}
  ae-panel{border-left:1px solid #b8860b}
  ae-tab{border-top:1px solid #b8860b;border-right:1px solid #b8860b;}
  ae-tab span{display:flex;gap:4px;align-items:center}
  .body{flex:1;min-height:0;display:grid;grid-template-columns:533px minmax(0,1fr) 17px;grid-template-rows:minmax(0,1fr) 17px;border:solid #b8860b;border-width:1px 1px 1px 0}
  .left{display:flex;flex-direction:column;min-width:0}
  .top{display:flex;height:36px;align-items:center;box-sizing:border-box;white-space:nowrap}
  .time{width:109px;text-align:center;color:var(--gold);font-weight:700;font-size:11px;line-height:12px}
  .time strong{display:block;font-size:16px;line-height:16px;width:82px;margin:auto;border-bottom:1px dotted var(--gold)}
  .top ae-search{width:240px} .ic{margin-left:auto;display:flex;gap:9px;padding-right:15px}
  table{border-collapse:collapse;table-layout:fixed;width:100%}
  th,td{padding:0;text-align:left;font-weight:400}
  th{height:19px;font-size:11px;background:linear-gradient(#4a4a4a,#383838)}
  th div{display:flex;align-items:center;height:11px;border-right:1px solid #222;padding-left:5px}
  td{height:16px;border-bottom:1px solid #303030;background:#555;line-height:16px}
  td div{display:flex;align-items:center;height:16px}
  .av{padding-left:5px;gap:3px} .av ui-icon{margin-right:13px}
  s{width:12px;height:12px;border:1px solid #474747;border-bottom-color:#aaa}
  .lb{padding-left:7px;gap:3px;color:#9a9a9a} .lb em{width:11px;height:11px;background:#6b7fe2;border:1px solid #333;box-sizing:border-box;margin-left:2px}
  .n{padding-left:7px;font-weight:700}
  .nm{padding-left:5px;gap:3px} .nm span{flex:1;background:#c4c4c4;color:#111;padding-left:4px;font-size:11px;line-height:16px;height:16px}
  td ae-select{width:100px;height:14px;display:grid}
  th:last-child div{margin-right:16px}
  .gut{border-left:1px solid #222;display:flex;flex-direction:column;align-items:center;padding-top:35px;gap:6px;color:#666;background:linear-gradient(#424242 70px,#383838 0)}
  .gut .e{margin:auto 0 5px;transform:rotate(180deg)}
  footer{grid-column:1/3;display:flex;align-items:center;border-top:1px solid #1b1b1b;}
  .fl{width:533px;display:flex;align-items:center;gap:5px;padding-left:5px;box-sizing:border-box}
  .fl button{margin-left:208px;border:1px solid #1c1c1c;width:132px;height:14px;justify-content:center;white-space:nowrap;line-height:12px}
  .z{display:flex;align-items:center;gap:12px;width:108px;padding-left:6px;box-sizing:border-box}
  input{appearance:none;width:44px;height:5px;margin:0 0 0 4px;background:#1d1d1d;border-radius:2px}
  input::-webkit-slider-thumb{appearance:none;width:8px;height:9px;background:#555;border:1px solid #111}
  .sb{flex:1;display:flex;align-items:center;height:16px;background:#363636;border:solid #1b1b1b;border-width:0 1px;padding-right:6px}
  .sb b{width:44px;height:16px;border:solid #1b1b1b;border-width:0 1px;background:#424242;margin-right:auto} .sb ui-icon:first-child{margin:0 6px}
  .sb .r{color:#c8c8c8}
</style>
<ae-panel><ae-tab slot="tab" active><span>${ic('square')}circle</span></ae-tab>
<div class="body"><div class="left">
<div class="top"><div class="time"><strong>0;00;00;29</strong>00029 (29.97 fps)</div><ae-search label="Search layers"></ae-search><div class="ic">${ic('mblur')}${ic('graph')}</div></div>
<table><colgroup><col style="width:67px"><col style="width:32px"><col style="width:33px"><col><col style="width:121px"></colgroup>
<thead><tr><th><div style="gap:5px">${ic('eye')}${ic('speaker')}${ic('dot')}${ic('lock')}</div></th><th><div style="padding-left:13px">${ic('tag')}</div></th><th><div>#</div></th><th><div>Layer Name</div></th><th><div></div></th></tr></thead>
<tbody>${layer(1, '右半圆')}${layer(2, '左半圆')}${layer(3, '背景半圆')}</tbody></table></div>
<time-graph></time-graph>
<div class="gut">${ic('marker')}${ic('comp')}${ic('up')}<ui-icon class="e" name="up"></ui-icon></div>
<footer><div class="fl">${ic('t1')}${ic('t2')}${ic('t3')}<button>Toggle Switches / Modes</button></div><div class="z">${ic('hillS')}<input type="range" value="92" aria-label="Timeline zoom">${ic('hillL')}</div><div class="sb">${ic('left')}<b></b><ui-icon class="r" name="right"></ui-icon></div></footer>
</div></ae-panel>`);

/* ---------- right-hand panels ---------- */
make('info-panel', `<style>
  :host{display:grid;height:134px;flex:none}
  .g{display:flex;padding:6px 0 0 8px;line-height:13px;height:51px}
  .k{width:18px;height:18px;background:#000;border:1px solid #222;margin:11px 5px 0 0}
  dl{margin:0;display:grid;grid-template-columns:20px auto;align-content:start} dt,dd{margin:0}
  .rgba{width:69px;margin-top:-1px}
  .plus{border-left:1px solid #666;padding:17px 4px 0 5px;font-size:18px;line-height:14px;height:34px}
  dl.xy{grid-template-columns:16px auto;margin-top:-1px}
  p{margin:8px 9px 0 6px;border-top:1px solid #666;padding:3px 1px}
</style>
<ae-panel><ae-tab slot="tab" active>Info</ae-tab><ae-tab slot="tab">Audio</ae-tab>
<div class="g"><div class="k"></div><dl class="rgba"><dt>R :</dt><dd></dd><dt>G :</dt><dd></dd><dt>B :</dt><dd></dd><dt>A :</dt><dd>0</dd></dl><div class="plus">+</div><dl class="xy"><dt>X :</dt><dd>962</dd><dt>Y :</dt><dd>612</dd></dl></div>
<p>3 layers selected</p></ae-panel>`);
make('preview-panel', `<style>
  :host{display:grid;height:48px;flex:none} ${BTN}
  div{display:flex;justify-content:space-between;align-items:center;padding:4px 6px 0 12px;height:22px}
</style><ae-panel><ae-tab slot="tab" active>Preview</ae-tab><div>${['first', 'prev', 'play', 'next', 'last', 'speaker', 'loop', 'ram'].map(n => `<button aria-label="${n}">${ic(n)}</button>`).join('')}</div></ae-panel>`);
make('effects-panel', `<style>
  :host{display:grid;height:171px;flex:none}
  ae-search{margin:4px 7px 3px 6px;flex:none}
  .w{display:flex;flex:1;min-height:0;border-top:1px solid #1b1b1b}
  ul{margin:0;padding:0;list-style:none;flex:1;overflow:hidden}
  li{height:16px;border-bottom:1px solid #363636;display:flex;align-items:center;gap:4px;padding-left:6px;color:#d2d2d2}
  li ui-icon{color:#8c8c8c}
  .sb{width:16px;border:solid #1b1b1b;border-width:0 1px;background:#383838;margin-right:2px;display:flex;flex-direction:column;align-items:center;color:#bbb}
  .sb b{width:16px;height:18px;border:solid #1b1b1b;border-width:1px 0;background:#424242;margin:6px 0 auto} .sb ui-icon:first-child{margin-top:7px} .d{transform:rotate(180deg);margin-bottom:5px}
  footer{height:16px;border-top:1px solid #1b1b1b;display:flex;justify-content:flex-end;align-items:center;padding-right:26px}
</style><ae-panel><ae-tab slot="tab" active>Effects &amp; Presets</ae-tab><ae-tab slot="tab">Character</ae-tab>
<ae-search label="Search effects"></ae-search>
<div class="w"><ul>${['* Animation Presets', '3D Channel', 'Audio', 'Blur &amp; Sharpen', 'Channel', 'CINEMA 4D', 'Color Correction'].map(t => `<li>${ic('right')}${t}</li>`).join('')}</ul><div class="sb">${ic('up')}<b></b><ui-icon class="d" name="up"></ui-icon></div></div>
<footer>${ic('note')}</footer></ae-panel>`);
make('align-panel', `<style>
  :host{display:grid;flex:1;min-height:0} ${BTN}
  .to{display:flex;align-items:center;justify-content:space-between;padding:5px 4px 0 6px;white-space:nowrap}
  ae-select{width:109px}
  .row{display:flex;justify-content:space-between;padding:8px 7px 6px 11px}
  p{margin:0 8px 0 5px;border-top:1px solid #606060;padding:2px 1px 0}
  .r2{padding-top:5px}
</style><ae-panel><ae-tab slot="tab" active>Align</ae-tab><ae-tab slot="tab">Move Anchor Point</ae-tab>
<div class="to"><span>Align Layers to:</span><ae-select label="Align Layers to" value="Selection"></ae-select></div>
<div class="row">${['al', 'ac', 'ar', 'at', 'am', 'ab'].map(n => `<button aria-label="Align">${ic(n)}</button>`).join('')}</div>
<p>Distribute Layers:</p>
<div class="row r2">${['d1', 'd2', 'd3', 'd4', 'd5', 'd6'].map(n => `<button aria-label="Distribute">${ic(n)}</button>`).join('')}</div></ae-panel>`);

/* ---------- application window ---------- */
make('ae-window', `<style>
  :host{display:flex;flex-direction:column;background:#161616}
  .title{display:flex;align-items:center;height:16px;flex:none;background:linear-gradient(#eee,#d2d2d2);color:#3c3c3c;position:relative}
  .title span{flex:1;text-align:center}
  .lights{position:absolute;left:6px;display:flex;gap:7px} .lights i{width:11px;height:11px;border-radius:50%}
  .work{flex:1;min-height:0;display:grid;grid-template-columns:minmax(0,1fr) 207px;gap:3px;padding-left:1px}
  .main{display:grid;grid-template-rows:368fr 303fr;gap:5px;min-width:0;min-height:0}
  .upper{display:grid;grid-template-columns:322fr 744fr;gap:3px;min-width:0;min-height:0}
  .side{display:flex;flex-direction:column;min-height:0}
  .bar{height:4px;background:#4a4a4a;margin:5px 0 2px 1px;flex:none}
</style>
<div class="title"><div class="lights"><i style="background:#fc5b57"></i><i style="background:#f5b92e"></i><i style="background:#1fc52f"></i></div><span>Adobe After Effects CC 2014 – circle.aep</span></div>
<ae-toolbar></ae-toolbar>
<div class="work"><div class="main"><div class="upper"><project-panel></project-panel><comp-viewer></comp-viewer></div><timeline-panel></timeline-panel></div>
<div class="side"><info-panel></info-panel><preview-panel style="margin-top:4px"></preview-panel><div class="bar" style="margin-right:23px"></div><effects-panel></effects-panel><div class="bar" style="margin-right:66px"></div><align-panel></align-panel></div></div>`);

/* ---------- Layer context menu ---------- */
const MENU = [['Mask>', 'Mask and Shape Path>', 'Quality>', 'Switches>', 'Transform>', 'Time>', 'Frame Blending>', '3D Layer', 'Guide Layer', '-Environment Layer', 'Blending Mode>', 'Layer Styles>'],
  ['Effect>', 'Keyframe Assistant>'],
  ['-Open Effect Controls', '-Open Layer', '-Open Layer Source', '-Reveal in Finder', '-Reveal Layer Source in Project', '-Reveal Layer in Project Flowchart', 'Reveal Expression Errors'],
  ['-Convert to Editable Text', '-Create Shapes from Text', '-Create Masks from Text', '-Create Shapes from Vector Layer', 'Camera>', '!Pre-compose...'],
  ['-Track Camera', '-Warp Stabilizer VFX', '-Track Motion', '-Track Mask'],
  ['Invert Selection', 'Select Children', '-Rename']];
make('menu-item', `<style>
  :host{display:block} ${BTN}
  button{display:flex;width:100%;height:19px;padding:0 12px 0 21px;justify-content:space-between;color:#101010;white-space:nowrap}
  button:disabled{color:#8b8b8b} :host([current]) button{background:#0a5fce;color:#fff}
</style><button role="menuitem"><slot></slot><svg width="9" height="10" viewBox="0 0 9 10"><path d="M0 0l9 5-9 5z"/></svg></button>`, (el, root) => {
  if (el.hasAttribute('off')) root.querySelector('button').disabled = true;
  root.querySelector('svg').style.display = el.hasAttribute('sub') ? 'block' : 'none';
});
make('layer-menu', `<style>
  :host{display:block;position:absolute;left:212px;top:24px;width:259px;padding:3px 0 5px;border-radius:0 0 5px 5px;font:15px/19px var(--mac);
   box-shadow:0 5px 14px rgba(0,0,0,.45);
   background:linear-gradient(90deg,#c8c8c8 0,rgba(204,204,204,.75) 35%,rgba(204,204,204,0) 85%),linear-gradient(#d6d6d6 0,#cdcdcd 9%,#e6e6e6 17%,#f0f0f0 28%,#f0f0f0 50%,#dadada 56%,#c4c4c4 61%,#c4c4c4 100%)}
  hr{border:0;height:2px;margin:5px 0;background:#b8b8b8}
</style>${MENU.map(g => g.map(t => `<menu-item${t.endsWith('>') ? ' sub' : ''}${t[0] === '-' ? ' off' : ''}${t[0] === '!' ? ' current' : ''}>${t.replace(/^[-!]|>$/g, '')}</menu-item>`).join('')).join('<hr>')}`);

/* hand-drawn annotation arrow aimed at Pre-compose */
make('pointer-arrow', `<style>:host{display:block;position:absolute;left:320px;top:440px;pointer-events:none;filter:drop-shadow(0 1px 1px rgba(0,0,0,.35))}svg{display:block}</style>
<svg width="214" height="132" viewBox="0 0 214 132"><path fill="#fe346e" d="M8 123L29 83l8 12L202 7c4-2 7 2 3 5L49 109l13 14z"/></svg>`);

/* ---------- dock ---------- */
const T = (x, y, s, f, t, w = 400) => `<text x="${x}" y="${y}" text-anchor="middle" font-family="Open Sans" font-size="${s}" font-weight="${w}" fill="${f}">${t}</text>`;
const APPS = [
  ['Finder', 1, '<path fill="#1c93f2" d="M4 5h19v35H4z"/><path fill="#e9f0f8" d="M23 5h18v35H23c-2-5-2-9-2-15h-4c0-8 2-15 6-20z"/><path d="M14 14v4M31 14v4M11 28c7 6 17 6 23 0" stroke="#16233a" stroke-width="1.600" fill="none" stroke-linecap="round"/>'],
  ['Launcher', 0, '<rect x="5" y="5" width="34" height="34" rx="2" fill="#fafafa"/>' + ['#e44', '#e44', '#e44', '#2a9d4c', '#39c', '#f90', '#2a9d4c', '#29c', '#fa0'].map((c, i) => `<rect x="${14 + i % 3 * 6}" y="${14 + (i / 3 | 0) * 6}" width="5" height="5" fill="${c}"/>`).join('')],
  ['Mailbox', 1, '<circle cx="22" cy="22" r="19.500" fill="#e6f4fa"/><circle cx="22" cy="22" r="18" fill="#2aa5dc"/><path d="M10 8v28M22 4v36M34 8v28M5 15h34M5 29h34" stroke="#57bdea" stroke-width=".7"/><path d="M14 16h4l4 5 4-5h4l4 15H10z" fill="#3ab5e8" stroke="#fff" stroke-width="2"/><path fill="#fff" d="M11 26h7l1 2h6l1-2h7l1 5H10z"/><circle cx="35" cy="9" r="8" fill="#f33b3b"/>' + T(35, 13, 11, '#fff', '2', 600)],
  ['Sunrise', 0, '<circle cx="22" cy="22" r="19.500" fill="#fff"/><path fill="#fb6450" d="M4 24a18 18 0 1136 0z"/><path d="M5 28h34M7 31.500h30M10 35h24M15 38.500h14" stroke="#f3625c" stroke-width="1.800"/>'],
  ['Evernote', 1, '<rect x="3" y="3" width="38" height="38" fill="#44b93c"/><path fill="#3b4340" d="M9 15l7-7 1 0v-1h6c2 1 3 2 8 2 3 1 4 4 4 12 0 5 0 9-2 13-1 4-9 4-9-1 0-3 3-4 5-3v3h-2v1c3 1 3-5 1-6-3-1-4 2-8 2-7 0-11-5-11-15z"/><path fill="#52c94a" d="M27 20c2-2 4-1 4 2-1 0-3 0-4-1z"/>'],
  ['NetEase Music', 1, '<rect x="2" y="2" width="40" height="40" rx="7" fill="#ec1c10"/><path d="M30 10c-4-4-8-1-7 3l3 11c0 6-9 6-9 0 0-7 13-8 16-1 3 9-4 15-11 15-8 0-13-6-13-13 0-6 3-10 8-12" fill="none" stroke="#fff" stroke-width="2.800" stroke-linecap="round"/>'],
  ['Chrome', 1, '<circle cx="22" cy="22" r="19.500" fill="#fbd10a"/><path fill="#e8453c" d="M22 22L5 12a19.500 19.500 0 0134.500 1.500H22z"/><path fill="#4caf50" d="M22 22L5 12a19.500 19.500 0 0015 29.500l9-15z"/><circle cx="22" cy="22" r="9" fill="#f2f2f2"/><circle cx="22" cy="22" r="7" fill="#3d86d6"/>'],
  ['WeChat', 0, '<ellipse cx="16" cy="17" rx="15" ry="13" fill="#79c94b"/><path fill="#79c94b" d="M7 26l-2 7 8-4z"/><circle cx="11" cy="13" r="2" fill="#34701c"/><circle cx="22" cy="13" r="2" fill="#34701c"/><ellipse cx="31" cy="27" rx="13" ry="11" fill="#f3f3f3"/><path fill="#f3f3f3" d="M36 35l5 6v-9z"/><circle cx="27" cy="24" r="1.500" fill="#666"/><circle cx="35" cy="24" r="1.500" fill="#666"/>'],
  ['QQ', 0, '<ellipse cx="13" cy="39" rx="8" ry="4" fill="#f4ab17"/><ellipse cx="31" cy="39" rx="8" ry="4" fill="#f4ab17"/><path fill="#141414" d="M22 1c9 0 14 7 13 17 5 7 6 14 4 17-2 0-3-2-4-4-2 6-7 9-13 9S11 37 9 31c-1 2-2 4-4 4-2-4 0-11 4-17C8 8 13 1 22 1z"/><ellipse cx="22" cy="30" rx="11" ry="9" fill="#fff"/><ellipse cx="18" cy="11" rx="3" ry="4" fill="#fff"/><ellipse cx="26" cy="11" rx="3" ry="4" fill="#fff"/><circle cx="19" cy="12" r="1.300"/><circle cx="25" cy="12" r="1.300"/><ellipse cx="22" cy="18" rx="7" ry="2.500" fill="#f4ab17"/><path fill="#e0231c" d="M8 19c8 5 20 5 28 0l1 5c-5 3-13 4-18 4v5l-5 1v-7l-7-3z"/>'],
  ['Weibo', 1, '<path d="M5 5l33-3 4 34-13 2-4 4-5-4H8z" fill="#36619c" stroke="#f0f0f0" stroke-width="1.800" stroke-linejoin="round"/><ellipse cx="20" cy="25" rx="9" ry="7" fill="none" stroke="#fff" stroke-width="2.500" transform="rotate(-14 20 25)"/><circle cx="19" cy="26" r="3.200" fill="#fff"/><path d="M26 11c6-1 9 4 8 9M26 15c3 0 5 2 4 5" stroke="#fff" stroke-width="2" fill="none"/>'],
  ['Sketch', 0, '<path fill="#f9b72b" d="M9 4l13-2 13 2 8 11-21 26L1 15z"/><path fill="#fdd96a" d="M9 4l13-2 13 2-4 11H13z"/><path fill="#fff3cf" d="M13 15l9-12 9 12z"/><path fill="#ee8416" d="M1 15h12l9 26z"/><path fill="#d96d10" d="M43 15H31l-9 26z"/><path fill="#fb9f24" d="M13 15h18l-9 26z"/>'],
  ['Photoshop', 0, '<rect x="2" y="2" width="40" height="39" fill="#0d1a33" stroke="#31c5f0" stroke-width="2"/>' + T(22, 30, 22, '#41d4fb', 'Ps', 600)],
  ['Illustrator', 0, '<rect x="2" y="2" width="40" height="39" fill="#261a0d" stroke="#f08a1c" stroke-width="2"/>' + T(22, 30, 22, '#fb9a2a', 'Ai', 600)],
  ['Dictionary', 1, '<path fill="#1d8ee0" d="M5 4l28-2 6 32-30 7z"/><path fill="#f2f2f2" d="M9 36l29-4 1 4-29 6z"/><path fill="#f5a623" d="M26 2l7 0 2 8-6-4z"/><circle cx="23" cy="18" r="11" fill="#72bdf0" stroke="#e6f2fa" stroke-width="1.500"/>' + T(23, 23, 14, '#fff', 'Aa') + '<path d="M30 27l8 9" stroke="#40444c" stroke-width="4" stroke-linecap="round"/>'],
  ['Courier', 1, '<circle cx="22" cy="22" r="21" fill="#d92e5c"/><path fill="#fff" d="M8 12h11l4 4-1-4h5l8 8h3v1.500H14zM8 32h11l4-4-1 4h5l8-8h3v-1.500H14z"/>'],
  ['Wave', 1, '<circle cx="22" cy="22" r="18.500" fill="#1e2022" stroke="#55d8e6" stroke-width="2.500"/><path d="M5 25c5-7 11-8 16 0s12 6 18-6" fill="none" stroke="#55d8e6" stroke-width="2.500"/>'],
  ['Terminal', 0, '<rect x="3" y="5" width="38" height="33" rx="1" fill="#1d1d1f" stroke="#9a9a9a" stroke-width="1.500"/><text x="7" y="17" font-family="Liberation Mono" font-size="10" font-weight="700" fill="#fff">&gt;_</text>'],
  ['After Effects', 1, '<rect x="2" y="2" width="40" height="39" fill="#1d0f3c" stroke="#dcb2f8" stroke-width="2"/>' + T(22, 29, 21, '#e3bcff', 'Ae', 600)],
  ['MindNode', 1, '<path fill="#35b8ad" d="M3 3h8l12 16L34 3h8L29 24H16z"/><path fill="#b7f1ea" d="M3 3h7l1 38H2zM35 3h7l1 38h-8z"/>'],
  null,
  ['Downloads', 0, '<path fill="#5bb5dc" d="M1 6h12l3 3h26v10H1z"/><rect x="1" y="11" width="41" height="27" rx="1" fill="#76cbf2"/><circle cx="22" cy="24" r="9" fill="#4ba8d8"/><path fill="#8ad6f8" d="M20 18h4v6h4l-6 6-6-6h4z"/>'],
  ['Trash', 0, '<path fill="#e8e8e8" d="M6 5h32l-4 33c-3 5-21 5-24 0z"/><path fill="#d8d8d8" d="M12 10h4l2 28h-3zM26 10h5l-4 28h-3z"/><ellipse cx="22" cy="5.500" rx="16" ry="4" fill="#d6d6d6" stroke="#f6f6f6"/><path fill="#fff" d="M9 5l5-4 5 3 6-3 4 3 5 0-4 4H13z"/><path d="M13 4l3 3M20 3l3 4M28 3l-2 4" stroke="#555" stroke-width="2"/>'],
];
make('dock-app', `<style>
  :host{display:flex;flex-direction:column;align-items:center;width:47px} ${BTN}
  svg{display:block;overflow:visible} i{width:4px;height:4px;border-radius:50%;margin-top:2px} :host([running]) i{background:#000}
</style><button><slot></slot></button><i></i>`, (el, root) => {
  const app = APPS[el.getAttribute('index')];
  const b = root.querySelector('button');
  b.setAttribute('aria-label', app[0]);
  b.innerHTML = `<svg width="44" height="44" viewBox="0 0 44 44">${app[2]}</svg>`;
});
make('mac-dock', `<style>
  :host{display:flex;justify-content:center;flex:none;padding-top:1px;background:linear-gradient(rgba(120,140,170,.14),transparent)}
  div{display:flex;height:52px;padding:4px 3px 0;border-radius:4px 4px 0 0;background:linear-gradient(90deg,#4f5563,#626c85 25%,#6a7591 60%,#717996)}
  hr{width:1px;height:42px;margin:2px 8px 0 12px;border:0;background:#4b5268}
</style><div>${APPS.map((a, i) => a ? `<dock-app index="${i}"${a[1] ? ' running' : ''}></dock-app>` : '<hr>').join('')}</div>`);
</script>
</body>
</html>
